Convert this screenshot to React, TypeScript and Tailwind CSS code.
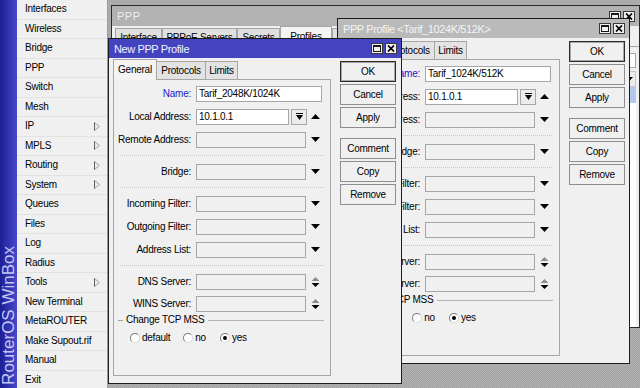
import React from "react"

const MENU: [string, boolean][] = [
  ["Interfaces", false],
  ["Wireless", false],
  ["Bridge", false],
  ["PPP", false],
  ["Switch", false],
  ["Mesh", false],
  ["IP", true],
  ["MPLS", true],
  ["Routing", true],
  ["System", true],
  ["Queues", false],
  ["Files", false],
  ["Log", false],
  ["Radius", false],
  ["Tools", true],
  ["New Terminal", false],
  ["MetaROUTER", false],
  ["Make Supout.rif", false],
  ["Manual", false],
  ["Exit", false],
]

const DESKTOP =
  "bg-[#a9a9a9] bg-[image:repeating-conic-gradient(#a2a2a2_0%_25%,#b3b3b3_0%_50%)] bg-[length:2px_2px]"

function SubArrow() {
  return (
    <svg width="6" height="9" viewBox="0 0 6 9">
      <path d="M0.5 0.5 L5.5 4.5 L0.5 8.5 Z" fill="#ececec" stroke="#a0a0a0" strokeWidth="1" />
      <path d="M0.5 0.5 L0.5 8.5" stroke="#606060" strokeWidth="1" />
    </svg>
  )
}

function Sidebar() {
  return (
    <div className="w-[108px] h-full flex shrink-0 border-r border-[#9c9c9c]">
      <div className="w-[17px] h-full bg-linear-to-r from-[#1e1e94] to-[#4848cc] flex flex-col justify-end items-center pb-[3px]">
        <span className="[writing-mode:vertical-rl] rotate-180 text-[17px] leading-[17px] tracking-normal text-[#c4c8f2] whitespace-nowrap">
          RouterOS WinBox
        </span>
      </div>
      <div className="flex-1 bg-[#f0f0f0] flex flex-col">
        {MENU.map(([label, sub]) => (
          <div
            key={label}
            className="h-[19.5px] shrink-0 flex items-center justify-between pl-[8px] pr-[7px] border-b border-[#e2e2e2]"
          >
            <span className="text-black whitespace-nowrap">{label}</span>
            {sub && <SubArrow />}
          </div>
        ))}
      </div>
    </div>
  )
}

function TitleButtons() {
  return (
    <div className="flex gap-[2px]">
      <div className="w-[12px] h-[11px] border border-[#3a3a3a] bg-[#f0f0f0] flex items-center justify-center">
        <div className="w-[8px] h-[7px] border border-[#1a1a1a] border-t-2" />
      </div>
      <div className="w-[12px] h-[11px] border border-[#3a3a3a] bg-[#f0f0f0] flex items-center justify-center">
        <svg width="8" height="7" viewBox="0 0 8 7">
          <path d="M1 0.5 L7 6.5 M7 0.5 L1 6.5" stroke="#000" strokeWidth="1.7" />
        </svg>
      </div>
    </div>
  )
}

function DownTri() {
  return (
    <svg width="9" height="5" viewBox="0 0 9 5">
      <path d="M0 0 H9 L4.5 5 Z" fill="#000" />
    </svg>
  )
}

function UpTri() {
  return (
    <svg width="9" height="5" viewBox="0 0 9 5">
      <path d="M0 5 H9 L4.5 0 Z" fill="#000" />
    </svg>
  )
}

function Spin() {
  return (
    <svg width="9" height="10" viewBox="0 0 9 10">
      <path d="M0.5 4 H8.5 L4.5 0 Z" fill="#8c8c8c" />
      <path d="M0.5 6 H8.5 L4.5 10 Z" fill="#000" />
    </svg>
  )
}

function PickIcon() {
  return (
    <svg width="7" height="8" viewBox="0 0 7 8">
      <path d="M0 0.5 H7" stroke="#000" strokeWidth="1" />
      <path d="M0 2 H7 L3.5 7 Z" fill="#000" />
    </svg>
  )
}

interface FieldProps {
  label: string
  value?: string
  white?: boolean
  blue?: boolean
  wide?: boolean
  pick?: boolean
  icon?: "down" | "up" | "spin"
  h?: string
}

function Field({ label, value, white, blue, wide, pick, icon, h = "h-[23px]" }: FieldProps) {
  const w = wide ? "w-[126px]" : pick ? "w-[93px]" : "w-[110px]"
  return (
    <div className={`${h} shrink-0 flex items-center`}>
      <div className={`w-[77px] text-right whitespace-nowrap ${blue ? "text-[#2020c8]" : "text-black"}`}>
        {label}
      </div>
      <div
        className={`ml-[5px] ${w} h-[16px] border border-[#a6a6a6] px-[2px] flex items-center whitespace-nowrap overflow-hidden text-black ${
          white ? "bg-white" : "bg-[#f0f0f0]"
        }`}
      >
        {value}
      </div>
      {pick && (
        <div className="ml-[2px] w-[16px] h-[16px] border border-[#a6a6a6] bg-[#ececec] flex items-center justify-center">
          <PickIcon />
        </div>
      )}
      {icon && (
        <div className={`${pick ? "ml-[4px]" : "ml-[5px]"} w-[9px] flex items-center justify-center`}>
          {icon === "down" && <DownTri />}
          {icon === "up" && <UpTri />}
          {icon === "spin" && <Spin />}
        </div>
      )}
    </div>
  )
}

function Sep() {
  return (
    <div className="h-[9px] shrink-0 flex items-center pl-[6px] pr-[7px]">
      <div className="flex-1 border-t border-dotted border-[#c4c4c4]" />
    </div>
  )
}

function Radio({ checked }: { checked?: boolean }) {
  return (
    <div className="w-[10px] h-[10px] rounded-full border border-[#7a7a7a] border-r-[#d8d8d8] border-b-[#d8d8d8] bg-white flex items-center justify-center">
      {checked && <div className="w-[4px] h-[4px] rounded-full bg-black" />}
    </div>
  )
}

function Btn({ label, def }: { label: string; def?: boolean }) {
  return (
    <div
      className={`h-[21px] shrink-0 flex items-center justify-center bg-[#f0f0f0] text-black ${
        def ? "border border-[#2a2a2a] shadow-[inset_0_0_0_1px_#a8a8a8]" : "border border-[#8e8e8e]"
      }`}
    >
      {label}
    </div>
  )
}

function ProfileWindow({ title, name, active }: { title: string; name: string; active?: boolean }) {
  return (
    <div className="isolate w-full h-full flex flex-col border border-[#1c1c1c] bg-[#f0f0f0]">
      <div
        className={`h-[19px] shrink-0 flex items-center pl-[5px] pr-[4px] ${
          active ? "bg-[#4444c0] text-[#f2f2ff]" : "bg-[#bababa] text-[#f4f4f4]"
        }`}
      >
        <span className="flex-1 text-[11px] tracking-[-0.4px] whitespace-nowrap">{title}</span>
        <TitleButtons />
      </div>
      <div className="flex-1 flex pl-[4px] pr-[4px] pt-[1px] pb-[7px]">
        <div className="w-[218px] flex flex-col">
          <div className="h-[20px] shrink-0 flex items-end">
            <div className="relative z-10 -mb-px w-[44px] h-[21px] border border-b-0 border-[#a6a6a6] bg-[#f4f4f4] flex items-center justify-center text-black">
              General
            </div>
            <div className="w-[49px] h-[18px] border border-l-0 border-b-0 border-[#a6a6a6] bg-[#e3e3e3] flex items-center justify-center text-black">
              Protocols
            </div>
            <div className="w-[32px] h-[18px] border border-l-0 border-b-0 border-[#a6a6a6] bg-[#e3e3e3] flex items-center justify-center text-black">
              Limits
            </div>
          </div>
          <div className="flex-1 flex flex-col border border-[#a6a6a6] pt-[2px]">
            <Field label="Name:" value={name} white blue wide />
            <Field label="Local Address:" value="10.1.0.1" white pick icon="up" />
            <Field label="Remote Address:" icon="down" />
            <Sep />
            <Field label="Bridge:" icon="down" />
            <Sep />
            <Field label="Incoming Filter:" icon="down" />
            <Field label="Outgoing Filter:" icon="down" />
            <Field label="Address List:" icon="down" />
            <Sep />
            <Field label="DNS Server:" icon="spin" />
            <Field label="WINS Server:" icon="spin" h="h-[21px]" />
            <div className="h-[12px] shrink-0 flex items-center">
              <div className="ml-[4px] w-[5px] border-t border-[#a0a0a0]" />
              <span className="ml-[3px] text-black whitespace-nowrap">Change TCP MSS</span>
              <div className="flex-1 ml-[4px] mr-[6px] border-t border-[#b4b4b4]" />
            </div>
            <div className="h-[24px] shrink-0 flex items-center pl-[16px] text-black">
              <Radio />
              <span className="ml-[2px]">default</span>
              <div className="ml-[13px]">
                <Radio />
              </div>
              <span className="ml-[2px]">no</span>
              <div className="ml-[14px]">
                <Radio checked />
              </div>
              <span className="ml-[2px]">yes</span>
            </div>
          </div>
        </div>
        <div className="ml-[9px] w-[56px] flex flex-col gap-[2px] pt-[2px]">
          <Btn label="OK" def />
          <Btn label="Cancel" />
          <Btn label="Apply" />
          <div className="h-[6px] shrink-0" />
          <Btn label="Comment" />
          <Btn label="Copy" />
          <Btn label="Remove" />
        </div>
      </div>
    </div>
  )
}

function PPPWindow() {
  const tabs = ["Interface", "PPPoE Servers", "Secrets", "Profiles", "Active Connections"]
  const widths = ["w-[47px]", "w-[75px]", "w-[43px]", "w-[52px]", "w-[100px]"]
  return (
    <div className="isolate w-full h-full flex flex-col border border-[#2a2a2a] bg-[#f0f0f0]">
      <div className="h-[20px] shrink-0 flex items-center pl-[5px] pr-[4px] bg-[#b2b2b2] text-[#ececec]">
        <span className="flex-1 text-[11px] tracking-[0.5px]">PPP</span>
        <TitleButtons />
      </div>
      <div className="h-[20px] shrink-0 flex items-end pl-[3px]">
        {tabs.map((t, i) => (
          <div
            key={t}
            className={`${widths[i]} border border-b-0 border-[#a6a6a6] flex items-center justify-center text-black whitespace-nowrap ${
              i === 3 ? "h-[20px] bg-[#f4f4f4]" : "h-[18px] bg-[#e0e0e0]"
            }`}
          >
            {t}
          </div>
        ))}
      </div>
      <div className="flex-1 flex flex-col border-t border-[#a6a6a6] px-[3px] pt-[6px]">
        <div className="h-[16px] shrink-0 flex justify-end">
          <div className="w-[80px] h-[15px] border border-[#a6a6a6] bg-white" />
        </div>
        <div className="h-[16px] mt-[2px] shrink-0 flex items-center justify-end pr-[2px] border border-[#c8c8c8] bg-[#ececec]">
          <DownTri />
        </div>
        <div className="h-[16px] shrink-0 bg-[#b4c8ec]" />
        <div className="flex-1 bg-white" />
      </div>
    </div>
  )
}

export default function App() {
  return (
    <div className="w-[640px] h-[388px] flex overflow-hidden font-['Liberation_Sans',Arial,sans-serif] text-[10px] leading-[12px] tracking-[-0.25px]">
      <Sidebar />
      <div className={`relative isolate flex-1 ${DESKTOP}`}>
        <div className="absolute z-[1] left-[3px] top-[5px] w-[529px] h-[323px]">
          <PPPWindow />
        </div>
        <div className="absolute z-[2] left-[229px] top-[18px] w-[293px] h-[346px]">
          <ProfileWindow title={"PPP Profile <Tarif_1024K/512K>"} name="Tarif_1024K/512K" />
        </div>
        <div className="absolute z-[3] left-0 top-[38px] w-[294px] h-[346px]">
          <ProfileWindow title="New PPP Profile" name="Tarif_2048K/1024K" active />
        </div>
      </div>
    </div>
  )
}
